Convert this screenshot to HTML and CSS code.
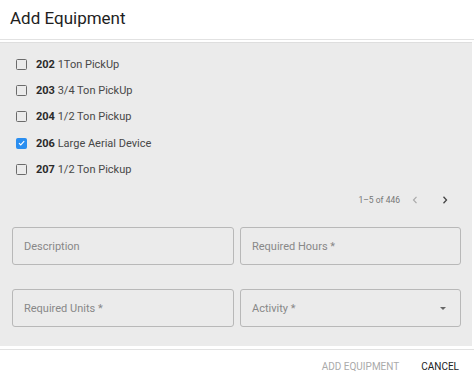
FILE: index.html
```html
<!DOCTYPE html>
<html>
<head>
<meta charset="utf-8">
<link rel="stylesheet" href="styles.css">
</head>
<body>
<div class="dialog">
  <div class="header">Add Equipment</div>
  <div class="content">
    <ul class="list">
      <li class="row"><span class="box"></span><span class="label"><b>202</b> 1Ton PickUp</span></li>
      <li class="row"><span class="box"></span><span class="label"><b>203</b> 3/4 Ton PickUp</span></li>
      <li class="row"><span class="box"></span><span class="label"><b>204</b> 1/2 Ton Pickup</span></li>
      <li class="row"><span class="box checked"><svg viewBox="0 0 12 12" width="12" height="12"><path d="M2.6 6.2 L5 8.5 L9.6 3.6" fill="none" stroke="#fff" stroke-width="1.5"/></svg></span><span class="label"><b>206</b> Large Aerial Device</span></li>
      <li class="row"><span class="box"></span><span class="label"><b>207</b> 1/2 Ton Pickup</span></li>
    </ul>
    <div class="pager">
      <span class="count">1–5 of 446</span>
      <svg class="chev dim" viewBox="0 0 10 10" width="10" height="10"><path d="M6.5 1.8 L3.5 5 L6.5 8.2" fill="none" stroke="currentColor" stroke-width="1.2"/></svg>
      <svg class="chev" viewBox="0 0 10 10" width="10" height="10"><path d="M3.5 1.8 L6.5 5 L3.5 8.2" fill="none" stroke="currentColor" stroke-width="1.3"/></svg>
    </div>
    <div class="fields">
      <div class="field">Description</div>
      <div class="field">Required Hours *</div>
      <div class="field">Required Units *</div>
      <div class="field select">Activity *<span class="arrow"></span></div>
    </div>
  </div>
  <div class="footer">
    <span class="btn disabled">ADD EQUIPMENT</span>
    <span class="btn">CANCEL</span>
  </div>
</div>
</body>
</html>
```
FILE: styles.css
```css
html, body {
  margin: 0;
  padding: 0;
  background: #fff;
}
body {
  font-family: Roboto, "Liberation Sans", sans-serif;
  color: #333;
}
.dialog {
  width: 474px;
  height: 382px;
  display: flex;
  flex-direction: column;
}
.header {
  height: 40px;
  box-sizing: border-box;
  padding: 8px 0 0 10px;
  font-size: 17px;
  font-weight: 400;
  color: #1e1e1e;
  border-bottom: 1px solid #e2e2e2;
}
.content {
  margin: 2px 2px 0 0;
  background: #ebebeb;
  height: 304px;
  border-top: 1px solid #dedede;
  box-sizing: border-box;
}
.list {
  list-style: none;
  margin: 0;
  padding: 8px 0 0 16px;
}
.row {
  height: 26.3px;
  display: flex;
  align-items: center;
}
.box {
  width: 9px;
  height: 9px;
  border: 1.5px solid #6b6b6b;
  border-radius: 1.5px;
  margin-right: 9px;
  display: flex;
  align-items: center;
  justify-content: center;
}
.box.checked {
  background: #2a8ef0;
  border-color: #2a8ef0;
}
.box svg {
  width: 10px;
  height: 10px;
}
.label {
  font-size: 11px;
  color: #484848;
}
.label b {
  font-weight: 700;
  color: #2a2a2a;
}
.pager {
  display: flex;
  align-items: center;
  justify-content: flex-end;
  height: 22px;
  margin-top: 7px;
  padding-right: 22px;
}
.count {
  font-size: 8.5px;
  color: #777;
  margin-right: 10px;
}
.chev {
  color: #444;
}
.chev.dim {
  color: #aaa;
  margin-right: 20px;
}
.fields {
  display: grid;
  grid-template-columns: 222px 221px;
  column-gap: 6px;
  row-gap: 24px;
  padding: 16px 0 0 12px;
}
.field {
  height: 38px;
  box-sizing: border-box;
  border: 1px solid #b8b8b8;
  border-radius: 3px;
  font-size: 11px;
  color: #888;
  display: flex;
  align-items: center;
  padding-left: 11px;
  position: relative;
}
.arrow {
  position: absolute;
  right: 14px;
  top: 17px;
  width: 0;
  height: 0;
  border-left: 3.5px solid transparent;
  border-right: 3.5px solid transparent;
  border-top: 3.5px solid #666;
}
.footer {
  margin-top: 3px;
  border-top: 1px solid #e2e2e2;
  flex: 1;
  display: flex;
  align-items: center;
  justify-content: flex-end;
  padding: 0 15px 0 0;
}
.btn {
  font-size: 10px;
  font-weight: 400;
  color: #222;
  margin-left: 22px;
}
.btn.disabled {
  color: #aaa;
}
```
